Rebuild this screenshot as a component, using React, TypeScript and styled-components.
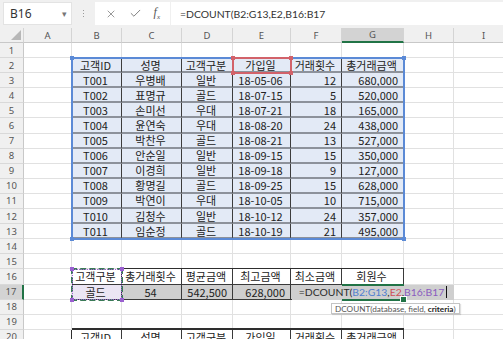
import React from "react";
import styled, { createGlobalStyle, css } from "styled-components";
import { X, Check } from "lucide-react";

const GREEN = "#217346";
const TABLE_FILL = "#e3eaf6";
const ROW17_FILL = "#cfcfcf";

const GlobalStyle = createGlobalStyle`
  html, body {
    margin: 0;
    padding: 0;
    background: #fff;
    overflow: hidden;
  }
  body {
    font-family: "Noto Sans CJK KR", "Noto Sans", sans-serif;
  }
`;

type Align = "left" | "center" | "right";
type Line = "grid" | "soft" | "hard";

interface CellDef {
  text?: string;
  align?: Align;
  fill?: string;
  line?: Line;
  top?: number;
  left?: boolean;
}

const head = ["고객ID", "성명", "고객구분", "가입일", "거래횟수", "총거래금액"];
const data = [
  ["T001", "우병배", "일반", "18-05-06", "12", "680,000"],
  ["T002", "표명규", "골드", "18-07-15", "5", "520,000"],
  ["T003", "손미선", "우대", "18-07-21", "18", "165,000"],
  ["T004", "윤연숙", "우대", "18-08-20", "24", "438,000"],
  ["T005", "박찬우", "골드", "18-08-21", "13", "527,000"],
  ["T006", "안순일", "일반", "18-09-15", "15", "350,000"],
  ["T007", "이경희", "일반", "18-09-18", "9", "127,000"],
  ["T008", "황명길", "골드", "18-09-25", "15", "628,000"],
  ["T009", "박연이", "우대", "18-10-05", "10", "715,000"],
  ["T010", "김청수", "일반", "18-10-12", "24", "357,000"],
  ["T011", "임순정", "골드", "18-10-19", "21", "495,000"],
];
const dataAlign: Align[] = ["center", "center", "center", "center", "right", "right"];

const letters = ["A", "B", "C", "D", "E", "F", "G", "H", "I"];

const blank = (): CellDef => ({});

function buildRow(n: number): CellDef[] {
  const row: CellDef[] = letters.map(blank);
  if (n === 2) {
    head.forEach((t, i) => (row[i + 1] = { text: t, align: "center", fill: TABLE_FILL, line: "soft" }));
  } else if (n >= 3 && n <= 13) {
    data[n - 3].forEach(
      (t, i) => (row[i + 1] = { text: t, align: dataAlign[i], fill: TABLE_FILL, line: "soft" })
    );
  } else if (n === 16) {
    ["고객구분", "총거래횟수", "평균금액", "최고금액", "최소금액", "회원수"].forEach(
      (t, i) => (row[i + 1] = { text: t, align: "center", line: "hard", top: i > 0 ? 1 : 0 })
    );
  } else if (n === 17) {
    row[1] = { text: "골드", align: "center", fill: "#ebe6f4", line: "hard" };
    row[2] = { text: "54", align: "center", fill: ROW17_FILL, line: "hard" };
    row[3] = { text: "542,500", align: "right", fill: ROW17_FILL, line: "hard" };
    row[4] = { text: "628,000", align: "right", fill: ROW17_FILL, line: "hard" };
    row[5] = { fill: ROW17_FILL, line: "hard" };
    row[6] = { fill: ROW17_FILL, line: "hard" };
  } else if (n === 20) {
    head.forEach(
      (t, i) => (row[i + 1] = { text: t, align: "center", line: "hard", top: 2, left: i === 0 })
    );
  }
  return row;
}

const rowNumbers = Array.from({ length: 20 }, (_, i) => i + 1);

export default function App() {
  return (
    <Window>
      <GlobalStyle />
      <FormulaBar>
        <NameBox>
          B16
          <Caret>▾</Caret>
        </NameBox>
        <Grip>
          <span />
          <span />
          <span />
        </Grip>
        <ButtonGroup>
          <BarIcon>
            <X size={12} strokeWidth={1.4} />
          </BarIcon>
          <BarIcon>
            <Check size={13} strokeWidth={1.6} />
          </BarIcon>
          <FxLabel>
            f<sub>x</sub>
          </FxLabel>
        </ButtonGroup>
        <FormulaInput>=DCOUNT(B2:G13,E2,B16:B17</FormulaInput>
      </FormulaBar>

      <SheetArea>
        <Sheet>
          <Corner>
            <svg width="10" height="10" viewBox="0 0 10 10">
              <polygon points="10,0 10,10 0,10" fill="#b7b7b7" />
            </svg>
          </Corner>
          {letters.map((l) => (
            <ColHeader key={l} $active={l === "G"}>
              {l}
            </ColHeader>
          ))}
          {rowNumbers.map((n) => (
            <React.Fragment key={n}>
              <RowHeader $active={n === 17}>{n}</RowHeader>
              {buildRow(n).map((c, i) => (
                <Cell
                  key={i}
                  $align={c.align ?? "left"}
                  $fill={c.fill}
                  $line={c.line ?? "grid"}
                  $top={c.top ?? 0}
                  $left={!!c.left}
                >
                  {c.text}
                </Cell>
              ))}
            </React.Fragment>
          ))}
        </Sheet>

        <Overlay>
          <RangeBox $area="3 / 3 / 15 / 9" $color="#5b8ad6">
            <Handle $pos="tl" $color="#5b8ad6" />
            <Handle $pos="tr" $color="#5b8ad6" />
            <Handle $pos="bl" $color="#5b8ad6" />
            <Handle $pos="br" $color="#5b8ad6" />
          </RangeBox>
          <RangeBox $area="3 / 6 / 4 / 7" $color="#d2626a">
            <Handle $pos="tl" $color="#d2626a" />
            <Handle $pos="tr" $color="#d2626a" />
            <Handle $pos="bl" $color="#d2626a" />
            <Handle $pos="br" $color="#d2626a" />
          </RangeBox>
          <Marquee $area="17 / 3 / 19 / 4">
            <Handle $pos="tl" $color="#9a5fd0" />
            <Handle $pos="tr" $color="#9a5fd0" />
            <Handle $pos="bl" $color="#9a5fd0" />
            <Handle $pos="br" $color="#9a5fd0" />
          </Marquee>
          <EditBox>
            <Ref $color="#2b2b2b">=DCOUNT(</Ref>
            <Ref $color="#4f7fcf">B2:G13</Ref>
            <Ref $color="#2b2b2b">,</Ref>
            <Ref $color="#d0505a">E2</Ref>
            <Ref $color="#2b2b2b">,</Ref>
            <Ref $color="#8a5cc0">B16:B17</Ref>
            <TextCursor />
          </EditBox>
          <ActiveCell>
            <FillHandle />
          </ActiveCell>
          <Tooltip>
            DCOUNT(database, field, <b>criteria</b>)
          </Tooltip>
        </Overlay>
      </SheetArea>
    </Window>
  );
}

const Window = styled.div`
  width: 503px;
  height: 339px;
  overflow: hidden;
  display: flex;
  flex-direction: column;
  background: #fff;
`;

const FormulaBar = styled.div`
  height: 28px;
  flex: none;
  display: flex;
  align-items: flex-start;
  padding: 2px 0 0 3px;
  box-sizing: border-box;
  background: #f0f0f0;
`;

const NameBox = styled.div`
  width: 69px;
  height: 23px;
  background: #fff;
  box-sizing: border-box;
  border: 1px solid #e3e3e3;
  display: flex;
  align-items: center;
  justify-content: space-between;
  padding: 0 4px 0 6px;
  font-family: "Noto Sans", sans-serif;
  font-size: 12px;
  color: #333;
`;

const Caret = styled.span`
  font-size: 9px;
  color: #777;
`;

const Grip = styled.div`
  width: 23px;
  height: 23px;
  display: flex;
  flex-direction: column;
  align-items: center;
  justify-content: center;
  gap: 2px;
  span {
    width: 1px;
    height: 1px;
    background: #9a9a9a;
  }
`;

const ButtonGroup = styled.div`
  width: 75px;
  height: 23px;
  background: #fff;
  display: flex;
  align-items: center;
  justify-content: space-around;
  padding: 0 4px;
  box-sizing: border-box;
`;

const BarIcon = styled.span`
  display: flex;
  color: #6d6d6d;
`;

const FxLabel = styled.span`
  font-family: "Liberation Serif", serif;
  font-style: italic;
  font-size: 12px;
  color: #555;
  sub {
    font-size: 7px;
  }
`;

const FormulaInput = styled.div`
  flex: 1;
  height: 23px;
  margin-left: 1px;
  background: #fff;
  display: flex;
  align-items: center;
  padding-left: 9px;
  font-family: Lato, "Noto Sans", sans-serif;
  font-size: 10.4px;
  color: #333;
`;

const SheetArea = styled.div`
  position: relative;
  flex: 1;
`;

const gridTemplate = css`
  display: grid;
  grid-template-columns: 24px 48px 50px 60px 51px 58px 51px 62px 50px 60px;
  grid-template-rows: 15px repeat(20, 15.1px);
`;

const Sheet = styled.div`
  ${gridTemplate}
`;

const Corner = styled.div`
  background: #f0f0f0;
  border-right: 1px solid #d4d4d4;
  border-bottom: 1px solid #c8c8c8;
  display: flex;
  align-items: flex-end;
  justify-content: flex-end;
  padding: 0 2px 2px 0;
  box-sizing: border-box;
`;

const ColHeader = styled.div<{ $active?: boolean }>`
  background: ${(p) => (p.$active ? "#d3d3d3" : "#f0f0f0")};
  border-right: 1px solid #d4d4d4;
  border-bottom: ${(p) => (p.$active ? `2px solid ${GREEN}` : "1px solid #c8c8c8")};
  box-sizing: border-box;
  display: flex;
  align-items: center;
  justify-content: center;
  font-family: "Noto Sans", sans-serif;
  font-size: 9.5px;
  color: #555;
`;

const RowHeader = styled.div<{ $active?: boolean }>`
  background: ${(p) => (p.$active ? "#d3d3d3" : "#f0f0f0")};
  border-right: ${(p) => (p.$active ? `2px solid ${GREEN}` : "1px solid #c8c8c8")};
  border-bottom: 1px solid #d9d9d9;
  box-sizing: border-box;
  display: flex;
  align-items: center;
  justify-content: center;
  font-family: "Noto Sans", sans-serif;
  font-size: 9.5px;
  color: #555;
`;

const lineStyles = {
  grid: css`
    border-right: 1px solid #e1e1e1;
    border-bottom: 1px solid #e1e1e1;
  `,
  soft: css`
    border-right: 1px solid #3d3d3d;
    border-bottom: 2px solid #8d929b;
  `,
  hard: css`
    border-right: 1px solid #3a3a3a;
    border-bottom: 1px solid #3a3a3a;
  `,
};

const Cell = styled.div<{ $align: Align; $fill?: string; $line: Line; $top: number; $left: boolean }>`
  box-sizing: border-box;
  background: ${(p) => p.$fill ?? "#fff"};
  ${(p) => lineStyles[p.$line]}
  box-shadow: ${(p) =>
    [p.$top ? `0 -${p.$top}px 0 #2e2e2e` : "", p.$left ? "-1px 0 0 #2e2e2e" : ""]
      .filter(Boolean)
      .join(", ") || "none"};
  display: flex;
  align-items: center;
  justify-content: ${(p) =>
    p.$align === "right" ? "flex-end" : p.$align === "center" ? "center" : "flex-start"};
  padding: 0 5px 0 3px;
  font-size: 11px;
  color: #222;
  white-space: nowrap;
  overflow: hidden;
`;

const Overlay = styled.div`
  ${gridTemplate}
  position: absolute;
  inset: 0;
  pointer-events: none;
`;

const RangeBox = styled.div<{ $area: string; $color: string }>`
  grid-area: ${(p) => p.$area};
  position: relative;
  margin: -1px -1px -1px -1px;
  border: 2px solid ${(p) => p.$color};
`;

const Marquee = styled.div<{ $area: string }>`
  grid-area: ${(p) => p.$area};
  position: relative;
  margin: -1px -1px -1px -1px;
  border: 2px dashed #3b7a57;
  outline: 1px dotted #9a5fd0;
  outline-offset: -2px;
`;

const handlePos = {
  tl: css`top: -3px; left: -3px;`,
  tr: css`top: -3px; right: -3px;`,
  bl: css`bottom: -3px; left: -3px;`,
  br: css`bottom: -3px; right: -3px;`,
};

const Handle = styled.span<{ $pos: keyof typeof handlePos; $color: string }>`
  position: absolute;
  width: 4px;
  height: 4px;
  background: ${(p) => p.$color};
  ${(p) => handlePos[p.$pos]}
`;

const EditBox = styled.div`
  grid-area: 18 / 7 / 19 / 10;
  margin: 0 0 0 1px;
  background: ${ROW17_FILL};
  display: flex;
  align-items: center;
  justify-content: center;
  font-family: Lato, "Noto Sans", sans-serif;
  font-size: 10.4px;
  white-space: nowrap;
  z-index: 1;
`;

const Ref = styled.span<{ $color: string }>`
  color: ${(p) => p.$color};
`;

const TextCursor = styled.span`
  display: inline-block;
  width: 1px;
  height: 12px;
  margin-left: 2px;
  background: #111;
`;

const ActiveCell = styled.div`
  grid-area: 18 / 8 / 19 / 9;
  position: relative;
  margin: -1px 0;
  border-top: 2px solid ${GREEN};
  border-bottom: 2px solid ${GREEN};
  z-index: 2;
`;

const FillHandle = styled.span`
  position: absolute;
  right: -3px;
  bottom: -4px;
  width: 5px;
  height: 5px;
  background: ${GREEN};
  border: 1px solid #fff;
`;

const Tooltip = styled.div`
  grid-area: 19 / 7 / 20 / 11;
  justify-self: start;
  align-self: start;
  margin: 3px 0 0 40px;
  height: 11px;
  line-height: 10px;
  padding: 0 3px;
  box-sizing: border-box;
  background: #fff;
  border: 1px solid #c4c4c4;
  box-shadow: 1px 1px 1px rgba(0, 0, 0, 0.12);
  font-family: Lato, "Noto Sans", sans-serif;
  font-size: 8.2px;
  color: #555;
  white-space: nowrap;
  z-index: 3;
  b {
    color: #222;
  }
`;
